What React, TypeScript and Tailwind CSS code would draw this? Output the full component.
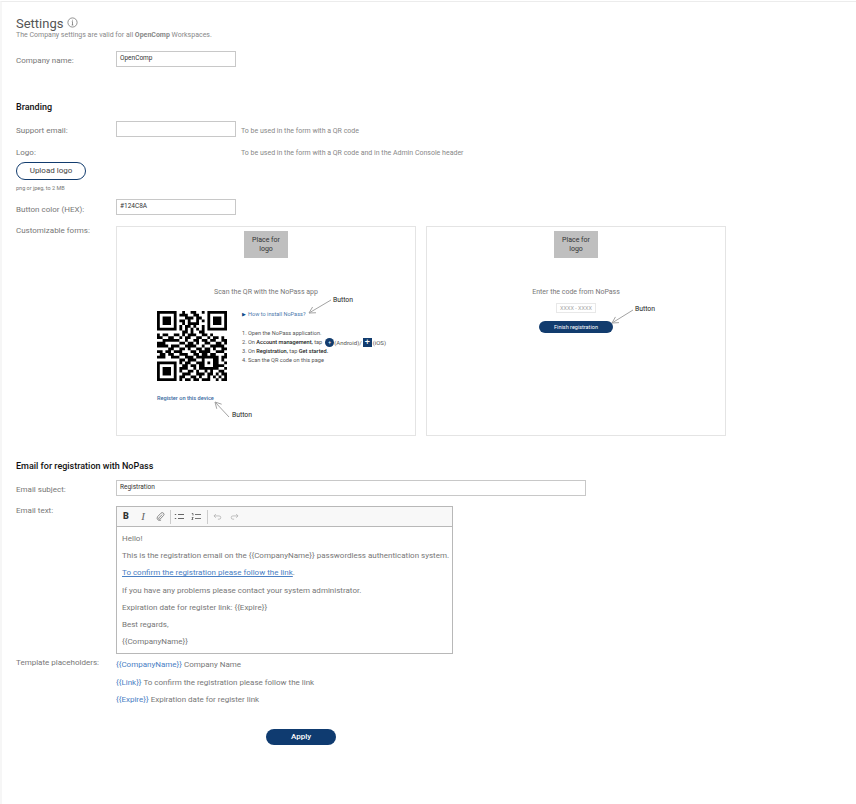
import React from "react";

const N = 25;
const QR_ROWS = [
  "1111111001001100101111111",
  "1000001011100110001000001",
  "1011101000111011001011101",
  "1011101011010010101011101",
  "1011101001011110001011101",
  "1000001010110100101000001",
  "1111111010101010101111111",
  "0000000001101001100000000",
  "1011001101011100110100000",
  "1100110010110011001011010",
  "0011111100100110110110011",
  "1110000011011010011001101",
  "1111011100111100100111110",
  "0000110011010011011010011",
  "1101101110001101111001110",
  "0110110011100110110110001",
  "1110011100111011011111011",
  "0000000011011100100011010",
  "1111111010110011101011001",
  "1000001001101101100011110",
  "1011101011100101111111001",
  "1011101010011010010100110",
  "1011101001110011101101011",
  "1000001011001101001010101",
  "1111111010110110111001011",
];

function qrMatrix(): boolean[][] {
  const m = QR_ROWS.map((r) => Array.from({ length: N }, (_, i) => r[i] === "1"));
  const finder = (ox: number, oy: number) => {
    for (let y = -1; y <= 7; y++)
      for (let x = -1; x <= 7; x++) {
        const X = ox + x, Y = oy + y;
        if (X < 0 || Y < 0 || X >= N || Y >= N) continue;
        m[Y][X] = x >= 0 && x <= 6 && y >= 0 && y <= 6 && (x === 0 || x === 6 || y === 0 || y === 6 || (x >= 2 && x <= 4 && y >= 2 && y <= 4));
      }
  };
  finder(0, 0);
  finder(18, 0);
  finder(0, 18);
  for (let y = 0; y < 5; y++)
    for (let x = 0; x < 5; x++) m[16 + y][16 + x] = x === 0 || x === 4 || y === 0 || y === 4 || (x === 2 && y === 2);
  return m;
}

function Qr() {
  const m = qrMatrix();
  let d = "";
  m.forEach((r, y) => r.forEach((c, x) => { if (c) d += `M${x} ${y}h1v1h-1z`; }));
  return (
    <svg width="70" height="70" viewBox="0 0 25 25" className="block shrink-0">
      <path d={d} fill="#000" />
    </svg>
  );
}

function Arrow({ className, x1, y1, x2, y2, w, h }: { className: string; x1: number; y1: number; x2: number; y2: number; w: number; h: number }) {
  const a = Math.atan2(y1 - y2, x1 - x2);
  const l = 7;
  const p1 = [x2 + l * Math.cos(a + 0.5), y2 + l * Math.sin(a + 0.5)];
  const p2 = [x2 + l * Math.cos(a - 0.5), y2 + l * Math.sin(a - 0.5)];
  return (
    <svg width={w} height={h} viewBox={`0 0 ${w} ${h}`} className={className} fill="none" stroke="#a3a3a3" strokeWidth="1">
      <path d={`M${x1} ${y1}L${x2} ${y2}M${p1[0]} ${p1[1]}L${x2} ${y2}L${p2[0]} ${p2[1]}`} />
    </svg>
  );
}

function Row({ label, children, className = "", labelClass = "" }: { label: string; children?: React.ReactNode; className?: string; labelClass?: string }) {
  return (
    <div className={`flex ${className}`}>
      <div className={`w-[100px] shrink-0 text-[8px] leading-[12px] text-[#777] ${labelClass}`}>{label}</div>
      {children}
    </div>
  );
}

function Field({ value = "", className = "w-[120px]" }: { value?: string; className?: string }) {
  return (
    <div className={`h-[16px] border border-[#c8c8c8] bg-white px-[3px] text-[6.5px] leading-[12px] text-[#333] ${className}`}>{value}</div>
  );
}

function LogoBox() {
  return (
    <div className="mx-auto mt-[4px] flex h-[27px] w-[44px] items-center justify-center bg-[#bfbfbf] text-center text-[7px] leading-[8.5px] text-[#333]">
      <span>Place for<br />logo</span>
    </div>
  );
}

const ToolIcon = ({ children, className = "", size = 11 }: { children: React.ReactNode; className?: string; size?: number }) => (
  <svg width={size} height={size} viewBox="0 0 11 11" fill="none" stroke="currentColor" strokeWidth="0.9" className={className}>
    {children}
  </svg>
);

export default function App() {
  return (
    <div className="h-[804px] w-[856px] overflow-hidden bg-white [font-family:Roboto,sans-serif]">
      <div className="mt-[1px] h-[803px] border-t border-l-[2px] border-[#ececec] border-l-[#f6f6f6] pl-[14px]">
        <div className="mt-[12px] flex h-[15px] items-center gap-[4px] pt-[3px]">
          <span className="text-[13px] leading-[15px] text-[#555]">Settings</span>
          <svg width="11" height="11" viewBox="0 0 11 11" fill="none" stroke="#666" strokeWidth="0.7" className="mb-[2px]">
            <circle cx="5.5" cy="5.5" r="4.6" />
            <path d="M5.5 4.6V8M4.7 8H6.3M4.8 4.6H5.5M5.5 2.8V3.6" />
          </svg>
        </div>
        <div className="mt-[2px] text-[7px] leading-[9px] text-[#888]">
          The Company settings are valid for all <span className="font-bold">OpenComp</span> Workspaces.
        </div>

        <Row label="Company name:" className="mt-[11px] h-[16px] items-center" labelClass="pt-[4px]">
          <Field value="OpenComp" />
        </Row>

        <div className="mt-[34px] text-[9px] font-medium leading-[12px] text-[#111]">Branding</div>

        <Row label="Support email:" className="mt-[8px] h-[16px] items-center" labelClass="pt-[4px]">
          <Field />
          <span className="ml-[5px] mt-[5px] text-[7px] text-[#888]">To be used in the form with a QR code</span>
        </Row>

        <Row label="Logo:" className="mt-[9px] h-[14px] items-center">
          <span className="ml-[125px] text-[7px] text-[#888]">To be used in the form with a QR code and in the Admin Console header</span>
        </Row>

        <div className="mt-[2px] flex h-[18px] w-[70px] items-center justify-center rounded-full border border-[#123c6e] text-[8px] text-[#444]">Upload logo</div>
        <div className="mt-[4px] text-[5.5px] leading-[8px] text-[#777]">png or jpeg, to 2 MB</div>

        <Row label="Button color (HEX):" className="mt-[7px] h-[16px] items-center" labelClass="pt-[6px]">
          <Field value="#124C8A" />
        </Row>

        <Row label="Customizable forms:" className="mt-[11px]" labelClass="-mt-[1px]">
          <div className="relative h-[210px] w-[300px] border border-[#e4e4e4]">
            <LogoBox />
            <div className="mt-[28px] text-center text-[7px] leading-[12px] text-[#777]">Scan the QR with the NoPass app</div>
            <div className="mt-[8px] flex pl-[40px]">
              <div className="pt-[5px]">
                <Qr />
              </div>
              <div className="ml-[15px] text-[5.6px] text-[#555]">
                <div className="mt-[4px] flex items-center gap-[2px] leading-[8px] text-[#4a78ac]">
                  <span className="text-[5px] text-[#124c8a]">▶</span>
                  <span>How to install NoPass?</span>
                </div>
                <div className="mt-[11px] leading-[9px]">1. Open the NoPass application.</div>
                <div className="flex h-[9px] items-center whitespace-nowrap leading-[9px]">
                  <span>2. On <b className="font-medium text-[#222]">Account management,</b> tap</span>
                  <span className="ml-[3px] flex h-[9px] w-[9px] items-center justify-center rounded-full bg-[#123c6e] text-[5px] leading-none text-white">+</span>
                  <span className="text-[6px]">(Android)/</span>
                  <span className="mx-[1px] flex h-[9px] w-[9px] items-center justify-center bg-[#123c6e] text-[9px] leading-none text-white">+</span>
                  <span className="text-[6px]">(iOS)</span>
                </div>
                <div className="leading-[9px]">3. On <b className="font-medium text-[#222]">Registration,</b> tap <b className="font-medium text-[#222]">Get started.</b></div>
                <div className="leading-[9px]">4. Scan the QR code on this page</div>
              </div>
            </div>
            <div className="mt-[13px] pl-[40px] text-[5.6px] font-medium leading-[8px] text-[#3a69a0]">Register on this device</div>
            <span className="absolute left-[216px] top-[69px] text-[6.8px] leading-[8px] text-[#222]">Button</span>
            <Arrow className="absolute left-[190px] top-[71px]" w={26} h={17} x1={24} y1={2} x2={2} y2={15} />
            <Arrow className="absolute left-[96px] top-[173px]" w={18} h={19} x1={16} y1={17} x2={2} y2={2} />
            <span className="absolute left-[115px] top-[184px] text-[6.8px] leading-[8px] text-[#222]">Button</span>
          </div>
          <div className="relative ml-[10px] h-[210px] w-[300px] border border-[#e4e4e4]">
            <LogoBox />
            <div className="mt-[28px] text-center text-[7px] leading-[12px] text-[#777]">Enter the code from NoPass</div>
            <div className="mx-auto mt-[5px] flex h-[10px] w-[40px] items-center justify-center border border-[#e8e8e8] text-[5.5px] text-[#aaa]">XXXX - XXXX</div>
            <div className="mx-auto mt-[8px] flex h-[12px] w-[74px] items-center justify-center rounded-full bg-[#123c6e] text-[5.5px] text-white">Finish registration</div>
            <span className="absolute left-[208px] top-[78px] text-[6.8px] leading-[8px] text-[#222]">Button</span>
            <Arrow className="absolute left-[183px] top-[81px]" w={25} h={17} x1={23} y1={2} x2={2} y2={15} />
          </div>
        </Row>

        <div className="mt-[24px] text-[9px] font-medium leading-[12px] text-[#111]">Email for registration with NoPass</div>

        <Row label="Email subject:" className="mt-[8px] h-[16px] items-center" labelClass="pt-[4px]">
          <Field value="Registration" className="w-[470px]" />
        </Row>

        <Row label="Email text:" className="mt-[10px]" labelClass="-mt-[1px]">
          <div className="h-[148px] w-[337px] border border-[#b8b8b8]">
            <div className="flex h-[20px] items-center border-b border-[#b8b8b8] bg-[#f8f8f8] pl-[4px] text-[#666]">
              <span className="w-[10px] text-center text-[9px] font-black leading-none text-[#333]">B</span>
              <span className="ml-[7px] w-[10px] text-center font-['Liberation_Serif',serif] text-[11px] italic leading-none">I</span>
              <ToolIcon className="ml-[8px]" size={9}>
                <path d="M7.5 3.2L3.6 7.2a1 1 0 0 0 1.5 1.4l4-4.2a2.1 2.1 0 0 0-3-3L2 5.6a3 3 0 0 0 4.2 4.2" />
              </ToolIcon>
              <span className="ml-[5px] h-[14px] w-px bg-[#ccc]" />
              <ToolIcon className="ml-[3px]">
                <path d="M4 3.5H10M4 7.5H10M0.8 3.5H2.2M0.8 7.5H2.2" strokeWidth="1.1" />
              </ToolIcon>
              <ToolIcon className="ml-[6px]">
                <path d="M4 3.5H10M4 7.5H10M0.8 2.5H2V4.5M0.8 6.5H2.2L0.8 8.5H2.2" strokeWidth="0.9" />
              </ToolIcon>
              <span className="ml-[5px] h-[14px] w-px bg-[#ccc]" />
              <ToolIcon className="ml-[5px] text-[#aaa]" size={9}>
                <path d="M3.5 2.5L1.2 4.8L3.5 7M1.2 4.8H7.5a2 2 0 0 1 0 4H6" />
              </ToolIcon>
              <ToolIcon className="ml-[8px] text-[#aaa]" size={9}>
                <path d="M7.5 2.5L9.8 4.8L7.5 7M9.8 4.8H3.5a2 2 0 0 0 0 4H5" />
              </ToolIcon>
            </div>
            <div className="flex flex-col gap-[5.2px] whitespace-nowrap px-[5px] pt-[6px] text-[8px] leading-[12px] text-[#777]">
              <div>Hello!</div>
              <div>This is the registration email on the {"{{CompanyName}}"} passwordless authentication system.</div>
              <div><span className="text-[#4a80c4] underline">To confirm the registration please follow the link</span>.</div>
              <div>If you have any problems please contact your system administrator.</div>
              <div>Expiration date for register link: {"{{Expire}}"}</div>
              <div>Best regards,</div>
              <div>{"{{CompanyName}}"}</div>
            </div>
          </div>
        </Row>

        <Row label="Template placeholders:" className="mt-[4px]" labelClass="-mt-[1px]">
          <div className="flex flex-col gap-[5.5px] pt-[1px] text-[8px] leading-[12px] text-[#777]">
            <div><span className="text-[#4a80c4]">{"{{CompanyName}}"}</span> Company Name</div>
            <div><span className="text-[#4a80c4]">{"{{Link}}"}</span> To confirm the registration please follow the link</div>
            <div><span className="text-[#4a80c4]">{"{{Expire}}"}</span> Expiration date for register link</div>
          </div>
        </Row>

        <div className="ml-[250px] mt-[23px] flex h-[16px] w-[70px] items-center justify-center rounded-full bg-[#0f3b70] text-[8px] font-medium text-white">Apply</div>
      </div>
    </div>
  );
}
